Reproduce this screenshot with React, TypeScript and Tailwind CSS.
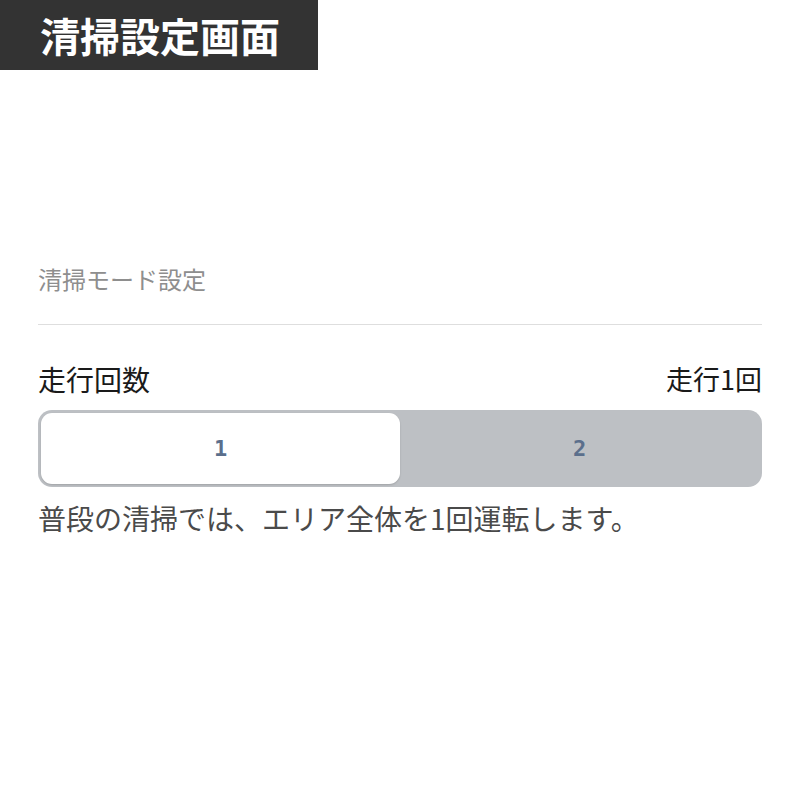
export default function App() {
  const jp = { fontFamily: '"Noto Sans CJK JP", "Noto Sans", sans-serif' };
  const num = { fontFamily: '"DejaVu Sans Mono", monospace' };
  return (
    <div className="min-h-[800px] w-[800px] bg-white" style={jp}>
      <div className="flex h-[70px] w-[318px] items-center bg-[#333333] pl-[40px]">
        <h1 className="text-[40px] font-bold leading-none text-white">清掃設定画面</h1>
      </div>

      <div className="px-[38px]">
        <p className="mt-[193px] text-[24px] leading-[32px] text-[#8e8e8e]">清掃モード設定</p>
        <div className="mt-[29px] h-px bg-[#dedede]" />

        <div className="mt-[38px] flex items-center justify-between">
          <span className="text-[28px] leading-[32px] text-[#1a1a1a]">走行回数</span>
          <span className="text-[27px] leading-[32px] text-[#1a1a1a]">走行1回</span>
        </div>

        <div className="mt-[15px] flex h-[77px] rounded-[14px] bg-[#bdc0c4] p-[3px]">
          <button className="flex flex-1 items-center justify-center rounded-[11px] bg-white shadow-[0_1px_2px_rgba(0,0,0,0.15)]">
            <span className="text-[22px] font-bold text-[#5b6f8c]" style={num}>1</span>
          </button>
          <button className="flex flex-1 items-center justify-center">
            <span className="text-[22px] font-bold text-[#5b6f8c]" style={num}>2</span>
          </button>
        </div>

        <p className="mt-[14px] text-[28px] leading-[34px] text-[#4a4a4a]">普段の清掃では、エリア全体を1回運転します。</p>
      </div>
    </div>
  );
}
